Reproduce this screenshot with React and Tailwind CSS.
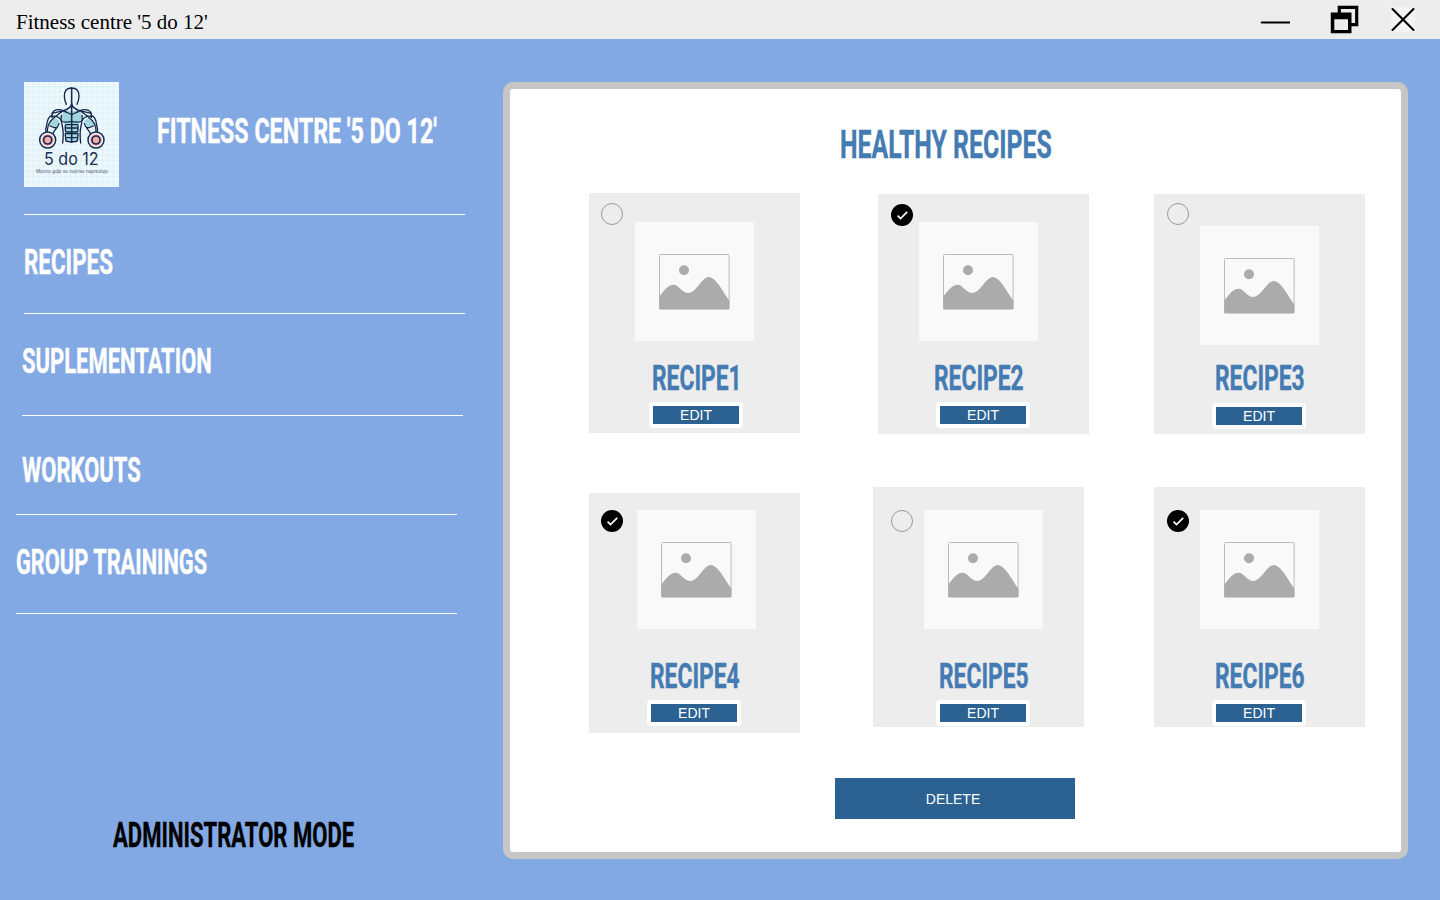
import { useLayoutEffect, useRef, useState } from "react";

// Condensed display lettering: squeezes a line of text to the width of its box.
function Display({ children, className = "" }) {
  const box = useRef(null);
  const line = useRef(null);
  const [scale, setScale] = useState(1);
  useLayoutEffect(() => {
    setScale(box.current.clientWidth / line.current.offsetWidth);
  }, [children]);
  return (
    <div ref={box} className={`shrink-0 font-['Roboto',sans-serif] font-bold ${className}`}>
      <span
        ref={line}
        className="inline-block origin-left whitespace-nowrap [-webkit-text-stroke:0.4px_currentColor]"
        style={{ transform: `scaleX(${scale})` }}
      >
        {children}
      </span>
    </div>
  );
}

function Half() {
  return (
    <g fill="none" stroke="#14284b" strokeWidth="4" strokeLinecap="round" strokeLinejoin="round">
      <path d="M143 18 C127 18 121 29 121 42 C121 54 124 61 127 67" />
      <path d="M143 66 C141 76 132 82 118 86 C128 92 137 94 143 98" />
      <path d="M118 86 C104 80 88 83 85 94 C84 98 83 102 84 106" />
      <path d="M84 94 C98 92 108 88 118 86 C104 96 92 104 81 116" />
      <path d="M84 100 C71 104 69 118 68 130 C65 139 64 145 66 150" />
      <path d="M81 104 C94 100 106 106 112 116 C118 124 132 119 143 119" />
      <path d="M81 116 C74 124 70 138 70 150 M105 124 C100 140 92 142 86 156 M78 132 C88 136 94 140 98 136" />
      <path d="M112 100 C109 112 113 122 115 132 C118 146 118 168 116 183" />
      <path d="M143 128 H128 Q124 128 124 133 V138 H143 M124 140 Q124 150 128 150 H143 M143 155 H124 V162 Q124 167 128 167 H143 M125 168 V173 Q126 179 134 179 L143 180" />
    </g>
  );
}

function Logo() {
  const cols = [11, 27, 43, 59, 75, 91, 107, 123, 140, 155, 172, 188, 204, 220, 236, 252, 268];
  const rows = [14, 30, 46, 62, 78, 94, 110, 126, 142, 158, 174, 188, 204, 220, 236, 252, 268, 284, 300];
  return (
    <svg viewBox="0 0 285 315" className="h-[105px] w-[95px] shrink-0">
      <rect width="285" height="315" fill="#ecf8fe" />
      <g stroke="#d9e8ef" strokeWidth="1.5">
        {cols.map((x) => <path key={x} d={`M${x} 0V315`} />)}
        {rows.map((y) => <path key={y} d={`M0 ${y}H285`} />)}
      </g>
      <path d="M118 86 H168 L174 108 L166 119 L162 180 H124 L120 119 L112 108Z" fill="#a3d5df" />
      <path d="M88 106 L106 116 L93 139 L75 130Z M198 106 L180 116 L193 139 L211 130Z" fill="#a3d5df" />
      <Half />
      <g transform="translate(286 0) scale(-1 1)"><Half /></g>
      <path d="M143 18V183" stroke="#14284b" strokeWidth="4.5" />
      {[71, 216].map((x) => (
        <g key={x} stroke="#14284b">
          <circle cx={x} cy="174" r="24" fill="#ecf8fe" strokeWidth="4.5" />
          <circle cx={x} cy="174" r="18" fill="#f7adad" stroke="none" />
          <circle cx={x} cy="174" r="12" fill="#f7adad" strokeWidth="5" />
        </g>
      ))}
      <text x="60" y="248" textLength="164" lengthAdjust="spacingAndGlyphs" fontSize="51" fill="#1b2f4f" fontFamily="Inter, sans-serif">5 do 12</text>
      <text x="36" y="272" textLength="216" lengthAdjust="spacingAndGlyphs" fontSize="13.5" fill="#4a5c72" fontFamily="Inter, sans-serif">Mjesto gdje se najvise napreduje</text>
    </svg>
  );
}

function Placeholder({ className }) {
  return (
    <svg viewBox="0 0 119 119" className={`h-[119px] w-[119px] shrink-0 bg-[#f9f9f9] ${className}`}>
      <rect x="24.5" y="32.5" width="69.6" height="54.5" rx="1" fill="none" stroke="#bdbdbd" />
      <circle cx="49" cy="48.3" r="5" fill="#ababab" />
      <path d="M24.3 74.5 C30 67 34 62.7 38.5 62.7 C44 62.7 47 71 53.5 71 C61 71 67 55 73.7 55 C81 55 88 70 94.3 78.5 V87.2 H24.3Z" fill="#ababab" />
    </svg>
  );
}

function Check({ on, className }) {
  return (
    <svg viewBox="0 0 22 22" className={`absolute h-[22px] w-[22px] ${className}`}>
      {on ? (
        <>
          <circle cx="11" cy="11" r="11" fill="#000" />
          <path d="M6.6 11.6 L9.5 14.5 L16.2 7.8" fill="none" stroke="#fff" strokeWidth="1.7" />
        </>
      ) : (
        <circle cx="11" cy="11" r="10.5" fill="none" stroke="#999" />
      )}
    </svg>
  );
}

const rows = [
  [
    { name: "RECIPE1", card: "", check: "left-3 top-2.5", image: "ml-[46px] mt-[29px]", title: "ml-[63px] mt-6", edit: "ml-[60px] mt-[11px]" },
    { name: "RECIPE2", on: true, card: "ml-[78px] mt-px", check: "left-[13px] top-2.5", image: "ml-[41px] mt-7", title: "ml-[56px] mt-6", edit: "ml-[58px] mt-[11px]" },
    { name: "RECIPE3", card: "ml-[65px] mt-px", check: "left-[13px] top-[9px]", image: "ml-[46px] mt-8", title: "ml-[61px] mt-5", edit: "ml-[58px] mt-3" },
  ],
  [
    { name: "RECIPE4", on: true, card: "mt-1.5", check: "left-3 top-[17px]", image: "ml-12 mt-[17px]", title: "ml-[61px] mt-[34px]", edit: "ml-[58px] mt-[11px]" },
    { name: "RECIPE5", card: "ml-[73px]", check: "left-[18px] top-[23px]", image: "ml-[51px] mt-[23px]", title: "ml-[66px] mt-[34px]", edit: "ml-[63px] mt-[11px]" },
    { name: "RECIPE6", on: true, card: "ml-[70px]", check: "left-[13px] top-[23px]", image: "ml-[46px] mt-[23px]", title: "ml-[61px] mt-[34px]", edit: "ml-[58px] mt-[11px]" },
  ],
];

function Card({ item }) {
  return (
    <article className={`relative flex h-60 w-[211px] shrink-0 flex-col items-start bg-[#ededed] ${item.card}`}>
      <Check on={item.on} className={item.check} />
      <Placeholder className={item.image} />
      <Display className={`h-[26px] w-[90px] text-[35.5px] leading-[26px] text-[#457bb3] ${item.title}`}>{item.name}</Display>
      <button className={`h-[26px] w-[94px] shrink-0 rounded border-4 border-white bg-[#2b6292] text-sm leading-[18px] text-white ${item.edit}`}>
        EDIT
      </button>
    </article>
  );
}

export default function App() {
  const label = "h-[26px] text-[35.5px] leading-[26px]";
  return (
    <div className="flex h-[900px] w-[1440px] flex-col overflow-hidden bg-[#83a9e5] font-['Liberation_Sans',sans-serif]">
      <header className="flex h-[39px] shrink-0 items-start bg-[#ededed]">
        <span className="ml-4 mt-2.5 font-['Liberation_Serif',serif] text-[21px] leading-6 text-black">Fitness centre '5 do 12'</span>
        <div className="ml-auto flex">
          <svg viewBox="0 0 30 39" className="mr-[40px] h-[39px] w-[30px]">
            <path d="M1.8 22.5H29.5" stroke="#000" strokeWidth="2.2" strokeLinecap="round" />
          </svg>
          <svg viewBox="0 0 30 39" className="mr-[31px] h-[39px] w-[30px]">
            <path d="M9.3 13V7.3H26.7V24.7H20.5" fill="none" stroke="#000" strokeWidth="3.2" />
            <path d="M0.8 12.5H21.5V33.2H0.8Z M4.3 19.3V30H18V19.3Z" fillRule="evenodd" />
          </svg>
          <svg viewBox="0 0 24 39" className="mr-[25px] h-[39px] w-6">
            <path d="M0 7H24V32H0Z" fill="#f3f3f3" />
            <path d="M1.5 9L22.5 30M22.5 9L1.5 30" stroke="#000" strokeWidth="2.1" strokeLinecap="round" />
          </svg>
        </div>
      </header>
      <div className="flex flex-1">
        <aside className="flex w-[503px] shrink-0 flex-col items-start pt-[43px] text-white">
          <div className="ml-6 flex h-[105px] items-start">
            <Logo />
            <Display className={`ml-[38px] mt-[36px] w-[280px] ${label}`}>FITNESS CENTRE '5 DO 12'</Display>
          </div>
          <div className="ml-6 mt-[27px] h-px w-[441px] bg-white" />
          <Display className={`ml-6 mt-[34px] w-[89px] ${label}`}>RECIPES</Display>
          <div className="ml-6 mt-[38px] h-px w-[441px] bg-white" />
          <Display className={`ml-[22px] mt-[34px] w-[190px] ${label}`}>SUPLEMENTATION</Display>
          <div className="ml-[22px] mt-[41px] h-px w-[441px] bg-white" />
          <Display className={`ml-[22px] mt-[41px] w-[119px] ${label}`}>WORKOUTS</Display>
          <div className="ml-4 mt-[31px] h-px w-[441px] bg-white" />
          <Display className={`ml-4 mt-[34px] w-[191px] ${label}`}>GROUP TRAININGS</Display>
          <div className="ml-4 mt-[38px] h-px w-[441px] bg-white" />
          <Display className={`ml-[113px] mt-[208px] w-[241px] text-black ${label}`}>ADMINISTRATOR MODE</Display>
        </aside>
        <main className="mt-[43px] flex h-[777px] w-[905px] flex-col items-start rounded-[10px] border-[7px] border-[#c6c6c6] bg-white">
          <Display className="ml-[330px] mt-[42px] h-7 w-[212px] text-[39.5px] leading-7 text-[#457bb3]">HEALTHY RECIPES</Display>
          <div className="ml-[79px] mt-[34px] flex h-[294px] items-start">
            {rows[0].map((item) => <Card key={item.name} item={item} />)}
          </div>
          <div className="ml-[79px] flex h-[246px] items-start">
            {rows[1].map((item) => <Card key={item.name} item={item} />)}
          </div>
          <button className="ml-[325px] mt-[45px] h-[41px] w-60 bg-[#2b6292] pr-1 text-sm text-white">DELETE</button>
        </main>
      </div>
    </div>
  );
}
